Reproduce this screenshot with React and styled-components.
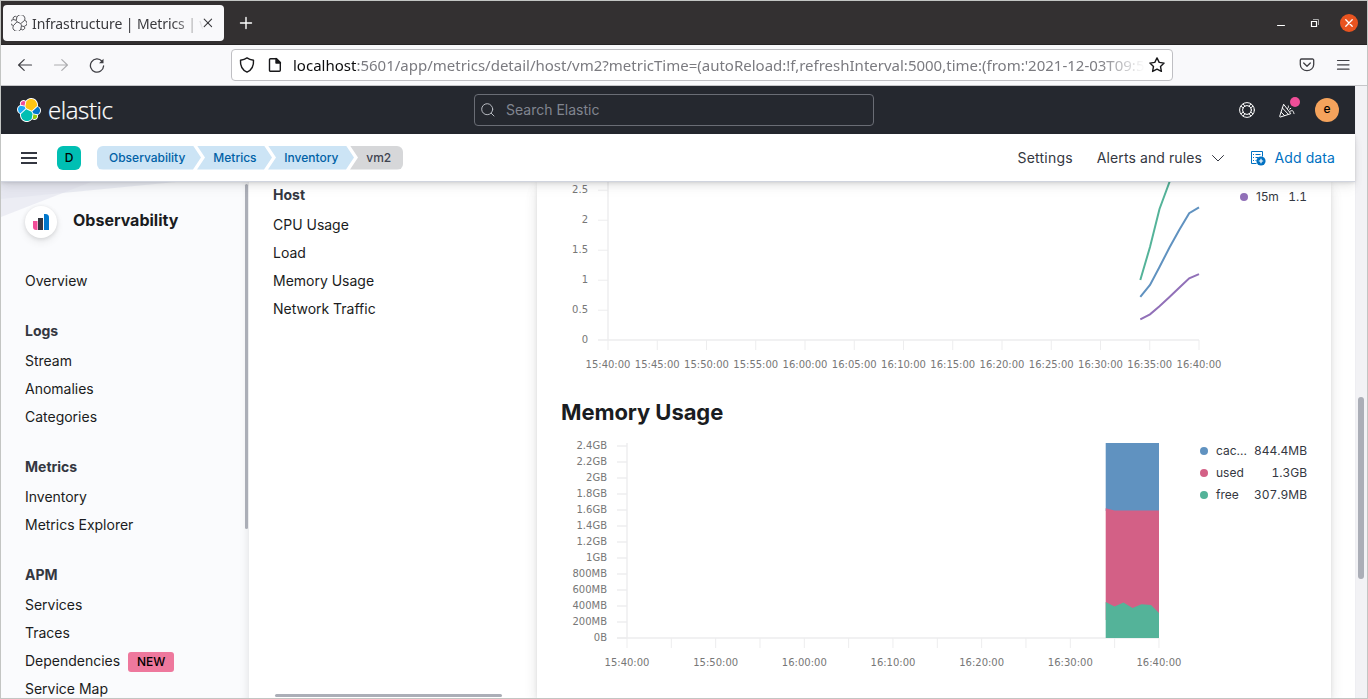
import React from "react";
import styled, { createGlobalStyle } from "styled-components";

const GlobalStyle = createGlobalStyle`
  *, *::before, *::after { box-sizing: border-box; }
  body { margin: 0; font-family: Inter, "Liberation Sans", sans-serif; font-size: 14px; color: #343741; }
  ul, h1, h2, h3 { margin: 0; padding: 0; list-style: none; }
`;

const ui = `"Noto Sans", "Open Sans", sans-serif`;

/* ---------- window ---------- */
const Window = styled.div`
  width: 1368px; height: 699px; border: 1px solid #c3c5c3; background: #fff;
  display: flex; flex-direction: column; overflow: hidden;
`;
const TitleBar = styled.div`
  height: 44px; flex: none; background: #333031; border-bottom: 1px solid #252324;
  display: flex; align-items: center; padding-right: 9px; color: #fff;
`;
const Tab = styled.div`
  width: 221px; height: 36px; margin-left: 2px; background: #f9f9fb; border-radius: 4px;
  display: flex; align-items: center; padding: 0 8px 0 8px; color: #3a3a3e;
`;
const TabTitle = styled.span`
  font: 14px/20px ${ui}; letter-spacing: -0.1px; white-space: nowrap; width: 171px; margin: 2px 0 0 5px; overflow: hidden;
  mask-image: linear-gradient(to right, #000 140px, transparent 173px);
`;
const NewTab = styled.div`margin-left: 15px; display: flex; flex: 1;`;
const WindowButtons = styled.div`display: flex; align-items: center;`;
const CloseButton = styled.div`
  width: 18px; height: 18px; border-radius: 50%; background: #e95420; margin-left: 20px;
  display: flex; align-items: center; justify-content: center;
`;
const Toolbar = styled.div`
  height: 41px; flex: none; background: #f9f9fb; border-bottom: 1px solid #c6c6c9;
  display: flex; align-items: center; padding: 0 16px 0 16px;
`;
const NavButtons = styled.div`display: flex; gap: 20px; width: 214px;`;
const AddressBar = styled.div`
  width: 942px; height: 32px; border: 1px solid #bfbfc3; border-radius: 4px; background: #fff;
  display: flex; align-items: center; padding: 0 7px;
`;
const Url = styled.span`
  flex: 1; margin-left: 11px; margin-right: 4px; overflow: hidden; white-space: nowrap; font: 15px/24px ${ui};
  color: #7b7b80;
  mask-image: linear-gradient(to right, #000 805px, transparent 852px);
  b { font-weight: 400; color: #0c0c0d; }
`;
const ToolbarEnd = styled.div`margin-left: auto; display: flex; gap: 20px;`;

/* ---------- page ---------- */
const Viewport = styled.div`flex: 1; display: flex; min-height: 0;`;
const Page = styled.div`width: 1354px; display: flex; flex-direction: column; min-height: 0;`;
const ScrollTrack = styled.div`
  flex: 1; background: #f2f2f5; border-left: 1px solid #eeeef2; padding: 311px 0 0 2px;
`;
const ScrollThumb = styled.div`
  width: ${(p) => p.$w}px; height: ${(p) => p.$h}px; border-radius: 3px; background: #abaeb7;
`;
const BrandBar = styled.header`
  height: 48px; flex: none; background: #25282f; display: flex; align-items: center;
  justify-content: space-between; padding: 0 16px;
`;
const Brand = styled.div`display: flex; align-items: center; gap: 7px; width: 232px;`;
const Wordmark = styled.span`
  color: #fff; font: 300 24px/30px "Open Sans", "Noto Sans", sans-serif; letter-spacing: -0.4px; margin-top: -1px;
  -webkit-text-stroke: 0.25px #fff;
`;
const SearchBox = styled.div`
  width: 400px; height: 32px; border: 1px solid #6a6d75; border-radius: 4px; display: flex; align-items: center;
  gap: 11px; padding-left: 6px; color: #81858f; line-height: 18px;
`;
const SearchText = styled.span`margin-top: 0;`;
const BrandActions = styled.div`
  width: 240px; display: flex; justify-content: flex-end; align-items: center; gap: 24px;
`;
const Notify = styled.div`position: relative; width: 16px; height: 16px; display: flex;`;
const NotifyDot = styled.span`
  position: absolute; right: -5px; top: -5px; width: 10px; height: 10px; border-radius: 50%; background: #f04e98;
`;
const Avatar = styled.div`
  width: 24px; height: 24px; border-radius: ${(p) => (p.$space ? "6px" : "50%")};
  background: ${(p) => (p.$space ? "#00bfb3" : "#f5a35c")}; color: #000; font-size: 12px; font-weight: 500;
  line-height: 22px; display: flex; justify-content: center; padding-top: ${(p) => (p.$space ? 1 : 0)}px;
  margin-left: ${(p) => (p.$space ? 20 : -4)}px;
`;
const CrumbBar = styled.div`
  height: 48px; flex: none; background: #fff; border-bottom: 1px solid #d0d4de; position: relative; z-index: 2;
  box-shadow: 0 1px 3px rgba(0,0,0,.1), 0 3px 8px rgba(0,0,0,.08), 0 8px 12px rgba(0,0,0,.03);
  display: flex; align-items: center; padding: 0 20px;
`;
const Crumbs = styled.ul`display: flex; margin-left: 16px;`;
const Crumb = styled.li`
  height: 24px; width: ${(p) => p.$w}px; margin-right: -4px; font-size: 12px; line-height: 24px; font-weight: 500;
  padding-left: ${(p) => (p.$first ? 12 : 16.3)}px; white-space: nowrap;
  color: ${(p) => (p.$last ? "#404350" : "#0061a6")};
  background: ${(p) => (p.$last ? "#d6d7d9" : "#cce4f5")};
  border-radius: ${(p) => (p.$first ? "6px 0 0 6px" : p.$last ? "0 6px 6px 0" : 0)};
  clip-path: ${(p) =>
    p.$first
      ? "polygon(0 0, calc(100% - 8px) 0, 100% 50%, calc(100% - 8px) 100%, 0 100%)"
      : p.$last
      ? "polygon(0 0, 100% 0, 100% 100%, 0 100%, 8px 50%)"
      : "polygon(0 0, calc(100% - 8px) 0, 100% 50%, calc(100% - 8px) 100%, 0 100%, 8px 50%)"};
`;
const PageLinks = styled.div`margin-left: auto; display: flex; align-items: center; gap: 24px;`;
const PageLink = styled.span`
  display: flex; align-items: center; gap: ${(p) => p.$gap || 8}px; letter-spacing: ${(p) => p.$spacing || 0.1}px;
  color: ${(p) => (p.$primary ? "#0071c2" : "#343741")};
`;

const Content = styled.div`flex: 1; display: flex; min-height: 0; overflow: hidden;`;
const Sidebar = styled.aside`
  width: 248px; flex: none; display: flex; background: #fafbfd; overflow: hidden;
  box-shadow: inset -8px 0 8px -7px rgba(0,0,0,.1);
`;
const SidebarBody = styled.div`flex: 1; padding-left: 24px; position: relative;`;
const Beams = styled.svg`position: absolute; left: 0; top: 0;`;
const SidebarHead = styled.div`display: flex; gap: 16px; margin: 24px 0 28px; position: relative; height: 32px;`;
const SolutionIcon = styled.div`
  width: 32px; height: 32px; border-radius: 50%; background: #fff; display: flex; align-items: center;
  justify-content: center; box-shadow: 0 1px 4px rgba(0,0,0,.12), 0 4px 8px rgba(0,0,0,.07);
`;
const SolutionName = styled.h2`font-size: 16px; line-height: 24px; font-weight: 700; color: #1a1c21; margin-top: 2px;`;
const Group = styled.ul`margin-bottom: 27px;`;
const GroupTitle = styled.li`font-weight: 700; font-size: 14px; line-height: 20px; margin-bottom: 5px; color: #343741;`;
const NavItem = styled.li`
  height: 28px; display: flex; align-items: center; gap: 8px; color: #1a1c21; letter-spacing: -0.01px;
`;
const NewBadge = styled.span`
  height: 20px; width: 46px; border-radius: 3px; background: #ee789d; color: #000; font-size: 12px; font-weight: 500;
  line-height: 20px; text-align: center; margin-top: 3px;
`;
const SideScroll = styled.div`width: 4px; padding-top: 2px; flex: none;`;
const HostNav = styled.nav`
  width: 288px; flex: none; padding: 3px 0 0 24px; display: flex; flex-direction: column; justify-content: space-between;
`;
const HostScroll = styled.div`padding: 0 0 1px 2px;`;
const Panel = styled.main`
  width: 794px; flex: none; padding: 0 24px; background: #fff;
  box-shadow: 0 1px 4px rgba(0,0,0,.08), 0 4px 12px rgba(0,0,0,.07), 0 8px 16px rgba(0,0,0,.05);
`;
const ChartRow = styled.section`display: flex; height: ${(p) => p.$h}px;`;
const ChartTitle = styled.h1`
  font-size: 22px; line-height: 32px; font-weight: 700; color: #1a1c21; margin: 14px 0 12px; letter-spacing: -0.08px;
`;
const Legend = styled.ul`margin-left: auto; width: ${(p) => p.$w}px; padding-top: ${(p) => p.$top}px;`;
const LegendItem = styled.li`
  display: flex; align-items: center; height: 22px; font-size: 12px; line-height: 18px; letter-spacing: 0; color: #343741;
  &::before { content: ""; width: 8px; height: 8px; border-radius: 50%; background: ${(p) => p.$color}; margin-right: 8px; }
`;
const LegendLabel = styled.span`margin-top: 0;`;
const LegendValue = styled.span`margin: 0 0 0 auto; font-variant-numeric: tabular-nums;`;
const ChartSvg = styled.svg`
  flex: none; display: block; overflow: visible;
  text { font: 10px "DejaVu Sans", sans-serif; fill: #777; }
`;

/* ---------- icons ---------- */
const Line = ({ size = 16, d, color = "currentColor", w = 1, children }) => (
  <svg width={size} height={size} viewBox={`0 0 ${size} ${size}`} fill="none" stroke={color} strokeWidth={w} strokeLinecap="round" strokeLinejoin="round">
    {d && <path d={d} />}
    {children}
  </svg>
);

const clusterPaths = [
  ["#fec514", "M12.58 13.787l7.002 3.211 7.066-6.213a7.849 7.849 0 00.152-1.557c0-1.692-.539-3.34-1.54-4.704a7.897 7.897 0 00-4.02-2.869 7.87 7.87 0 00-4.932.086 7.9 7.9 0 00-3.92 3.007l-1.174 6.118z"],
  ["#00bfb3", "M5.333 21.228A7.964 7.964 0 006.72 27.53a7.918 7.918 0 004.04 2.874 7.89 7.89 0 004.95-.097 7.921 7.921 0 003.926-3.03l1.166-6.102-1.555-2.984-7.03-3.211z"],
  ["#f04e98", "M5.288 9.067l4.8 1.137L11.14 4.73a3.785 3.785 0 00-4.538-.023A3.82 3.82 0 005.13 6.882a3.844 3.844 0 00.158 2.185"],
  ["#1ba9f5", "M4.872 10.214a5.294 5.294 0 00-2.595 1.882 5.324 5.324 0 00-.142 6.124 5.287 5.287 0 002.505 2l6.733-6.101-1.235-2.65z"],
  ["#93c90e", "M20.873 27.277a3.736 3.736 0 002.285.785 3.783 3.783 0 003.101-1.63 3.813 3.813 0 00.451-3.484l-4.8-1.125z"],
  ["#0077cc", "M21.848 20.563l5.28 1.238a5.34 5.34 0 002.622-1.938 5.37 5.37 0 001.013-3.106 5.312 5.312 0 00-.936-3.01 5.283 5.283 0 00-2.475-1.944l-6.904 6.07z"],
];
const clusterBase =
  "M32 16.77a6.334 6.334 0 00-1.14-3.63 6.269 6.269 0 00-3.02-2.3 9.098 9.098 0 00-.873-5.965A9.05 9.05 0 0022.56.746a9.007 9.007 0 00-5.994-.419 9.04 9.04 0 00-4.92 3.455 4.789 4.789 0 00-5.798-.047A4.833 4.833 0 004.21 9.326a6.357 6.357 0 00-3.035 2.33A6.4 6.4 0 000 15.3a6.346 6.346 0 001.145 3.643 6.282 6.282 0 003.034 2.302 9.054 9.054 0 00.874 5.958 9.007 9.007 0 004.403 4.122 8.965 8.965 0 005.987.417 8.999 8.999 0 004.915-3.45 4.782 4.782 0 002.894.995 4.774 4.774 0 002.898-.952 4.813 4.813 0 001.732-2.515 4.84 4.84 0 00-.09-3.056 6.357 6.357 0 003.036-2.33A6.402 6.402 0 0032 16.77";

const ElasticLogo = () => (
  <svg width="24" height="24" viewBox="0 0 32 32">
    <path fill="#fff" d={clusterBase} />
    {clusterPaths.map(([c, d]) => <path key={c} fill={c} d={d} />)}
  </svg>
);
const ElasticOutline = () => (
  <svg width="16" height="16" viewBox="0 0 32 32" fill="none" stroke="#4c4c50" strokeWidth="1.9" strokeLinejoin="round">
    <path d="M12 13.6l7.5 3.6 7.8-6.5A8.1 8.1 0 0011.7 4.6l-1.2 6.2z" />
    <path d="M20 18.2l.9 3.3-1.2 6.300A8.1 8.1 0 014.8 21.2l7.2-7.6" />
    <path d="M10.5 10.5L5 9.200A4 4 0 0111.5 4.400M5 9.2a5.7 5.7 0 00-.5 11.6M20.9 21.8l5.9 1.400A4 4 0 0120 27.8M27.3 10.9a5.7 5.7 0 01-.3 11.3" />
  </svg>
);
const HelpIcon = () => (
  <Line color="#fff">
    <circle cx="8" cy="8" r="7.4" />
    <circle cx="8" cy="8" r="4.4" />
    <path d="M2.2 4.400L4.500 6M4.400 2.200L6 4.500M13.800 4.400L11.500 6M11.600 2.200L10 4.500M2.200 11.600L4.500 10M4.400 13.800L6 11.500M13.800 11.600L11.500 10M11.600 13.800L10 11.500" />
  </Line>
);
const CheerIcon = () => (
  <Line color="#fff">
    <path d="M4.5 2.6L.7 14.3c-.1.5.2.8.7.7l10-3.2zM3.5 6.1l5.7 6M2.2 10.3l3.4 3.3M8.5 6.5c.9-.5 1.2-1.5.9-2.5M11 9.4c1.1-1 2.5-1 3.2 0 .6.9.3 1.9.9 2.4M10.5 7.2l1.3-.9" />
  </Line>
);
const AddDataIcon = () => (
  <svg width="17" height="16" viewBox="0 0 17 16" fill="none" stroke="#0071c2">
    <path d="M6.5 13.5h-5v-12h11v5M5.500 4.500h5M5.500 7.500h3M5.500 10.500h1" />
    <path d="M3 4.500h1M3 7.500h1M3 10.500h1" />
    <circle cx="11" cy="11" r="4.6" fill="#0071c2" stroke="none" />
    <path d="M8.8 11h4.4M11 8.8v4.4" stroke="#fff" strokeWidth="1.2" />
  </svg>
);
const ObservabilityLogo = () => (
  <svg width="16" height="16" viewBox="0 0 16 16">
    <path fill="#f04e98" d="M0 7h4.500v9H3a3 3 0 01-3-3z" />
    <path fill="#343741" d="M5 4h5v12H5z" />
    <path fill="#0077cc" d="M11 0h1.500A3.500 3.500 0 0116 3.500V16h-5z" />
  </svg>
);
const RestoreIcon = styled.svg`margin-left: 24px;`;
const DocIcon = styled.svg`margin-left: 13px;`;

/* ---------- charts ---------- */
const loadSeries = [
  ["#54b399", [[579.3, 98], [589, 65], [598.5, 27], [608.5, 0], [612, -10]]],
  ["#6092c0", [[579.3, 114.8], [589, 103], [598.5, 85], [608.5, 65.5], [618.2, 48], [628.2, 31.2], [638, 25.3]]],
  ["#9170b8", [[579.3, 137.3], [589, 132.3], [598.5, 124.3], [608.5, 115], [618.2, 105.7], [628.2, 96.3], [638, 92.2]]],
];
const points = (list) => list.map((p) => p.join(",")).join(" ");
const clock = (minutes) => `${15 + Math.floor(minutes / 60)}:${String(minutes % 60).padStart(2, "0")}:00`;

const LoadChart = () => (
  <ChartSvg width="662" height="200">
    <g stroke="#ededee">
      <path d="M47 0V158" strokeWidth="1.4" />
      <path d="M37 158H638" strokeWidth="1.4" />
      {[8, 38, 68, 98, 128].map((y) => <path key={y} d={`M37 ${y}.2H47`} />)}
      {Array.from({ length: 13 }, (_, i) => <path key={i} d={`M${47 + i * 49.25} 158V168`} />)}
    </g>
    {["2.5", "2", "1.5", "1", "0.5", "0"].map((t, i) => (
      <text key={t} x="27" y={11.3 + i * 30} textAnchor="end">{t}</text>
    ))}
    {Array.from({ length: 13 }, (_, i) => (
      <text key={i} x={47 + i * 49.25} y="185.5" textAnchor="middle">{clock(40 + i * 5)}</text>
    ))}
    <svg width="662" height="200">
      {loadSeries.map(([c, list]) => (
        <polyline key={c} points={points(list)} fill="none" stroke={c} strokeWidth="2" />
      ))}
    </svg>
  </ChartSvg>
);

const memoryTicks = ["2.4GB", "2.2GB", "2GB", "1.8GB", "1.6GB", "1.4GB", "1.2GB", "1GB", "800MB", "600MB", "400MB", "200MB", "0B"];
const MemoryChart = () => (
  <ChartSvg width="622" height="235">
    <g stroke="#ededee">
      <path d="M66 3V198" strokeWidth="1.4" />
      <path d="M56 198H598" strokeWidth="1.4" />
      {memoryTicks.map((t, i) => <path key={t} d={`M56 ${6 + i * 16}H66`} strokeWidth="1.4" />)}
      {Array.from({ length: 13 }, (_, i) => <path key={i} d={`M${66 + i * 44.33} 198V208`} />)}
    </g>
    <path fill="#6092c0" d="M544.7 3H598V71H544.7z" />
    <path fill="#d36086" d="M544.7 68.2L553.5 70.5H598V180H544.7z" />
    <path fill="#54b399" d="M544.7 162L553.5 166.5 562.5 162.5 571.5 168 580.5 164.3 590 165 598 173V198H544.7z" />
    {memoryTicks.map((t, i) => <text key={t} x="46" y={9.3 + i * 16} textAnchor="end">{t}</text>)}
    {Array.from({ length: 7 }, (_, i) => (
      <text key={i} x={66 + i * 88.66} y="225.5" textAnchor="middle">{clock(40 + i * 10)}</text>
    ))}
  </ChartSvg>
);

const sideGroups = [
  { items: ["Overview"] },
  { title: "Logs", items: ["Stream", "Anomalies", "Categories"] },
  { title: "Metrics", items: ["Inventory", "Metrics Explorer"] },
  { title: "APM", items: ["Services", "Traces", "Dependencies", "Service Map"] },
];

const NavGroup = ({ title, items }) => (
  <Group>
    {title && <GroupTitle>{title}</GroupTitle>}
    {items.map((item) => (
      <NavItem key={item}>
        {item}
        {item === "Dependencies" && <NewBadge>NEW</NewBadge>}
      </NavItem>
    ))}
  </Group>
);

const LegendRow = ({ color, label, value }) => (
  <LegendItem $color={color}>
    <LegendLabel>{label}</LegendLabel>
    <LegendValue>{value}</LegendValue>
  </LegendItem>
);

export default function App() {
  return (
    <Window>
      <GlobalStyle />
      <TitleBar>
        <Tab>
          <ElasticOutline />
          <TabTitle>Infrastructure | Metrics | v</TabTitle>
          <Line size={10} d="M1.2 1.2l7.4 7.4M8.6 1.2L1.2 8.6" w={1.1} />
        </Tab>
        <NewTab><Line size={14} d="M7 1.5v11M1.5 7h11" w={1.4} color="#fff" /></NewTab>
        <WindowButtons>
          <Line size={10} d="M1.5 7.5h7" color="#fff" />
          <RestoreIcon width="10" height="10" viewBox="0 0 10 10" fill="none" stroke="#fff">
            <path d="M1.5 3.5h5v5h-5z" strokeWidth="1.2" />
            <path d="M3 1.5h5.5V7" stroke="#aaa" />
          </RestoreIcon>
          <CloseButton><Line size={8} d="M.8 .8l6.4 6.4M7.2 .8L.8 7.2" w={1.3} color="#fff" /></CloseButton>
        </WindowButtons>
      </TitleBar>
      <Toolbar>
        <NavButtons>
          <Line d="M14.5 8h-13M7.2 2.6L1.6 8l5.6 5.4" w={1.2} color="#3f3f44" />
          <Line d="M1.5 8h13M8.8 2.6L14.4 8l-5.6 5.4" w={1.2} color="#adadb0" />
          <Line color="#3f3f44" w={1.3}>
            <path d="M13 4.2A6.6 6.6 0 1014.6 9" />
            <path d="M14.5 1.7v4.6H10z" fill="#3f3f44" stroke="none" />
          </Line>
        </NavButtons>
        <AddressBar>
          <Line color="#18181a" w={1.4} d="M8 .9c2 1.4 4.3 2 6.5 2.3.4 5.5-1.4 9.6-6.5 11.9C2.9 12.8 1.1 8.7 1.5 3.2 3.7 2.9 6 2.3 8 .9z" />
          <DocIcon width="14" height="16" viewBox="0 0 14 16" fill="none" stroke="#18181a" strokeWidth="1.4" strokeLinejoin="round">
            <path d="M2.5 1.7H8.5L12.3 5.5V13.3a1 1 0 01-1 1H2.5a1 1 0 01-1-1V2.7a1 1 0 011-1z" />
            <path d="M8 1.5V6h4.5z" fill="#18181a" />
          </DocIcon>
          <Url>
            <b>localhost</b>:5601/app/metrics/detail/host/vm2?metricTime=(autoReload:!f,refreshInterval:5000,time:(from:'2021-12-03T09:5
          </Url>
          <Line color="#18181a" w={1.4} d="M8 .9l2.2 4.5 4.9.7-3.6 3.4.9 4.9L8 12.1l-4.4 2.3.9-4.9L.9 6.1l4.9-.7z" />
        </AddressBar>
        <ToolbarEnd>
          <Line color="#3f3f44" w={1.3}>
            <path d="M2.5 2h11a1.2 1.2 0 011.2 1.2V7.5a6.7 6.2 0 01-13.4 0V3.2A1.2 1.2 0 012.5 2z" />
            <path d="M4.7 6L8 9.2 11.3 6" />
          </Line>
          <Line color="#3f3f44" w={1.2} d="M2.5 3.5h11.5M2.5 7.8h11.5M2.5 12.2h11.5" />
        </ToolbarEnd>
      </Toolbar>
      <Viewport>
        <Page>
          <BrandBar>
            <Brand><ElasticLogo /><Wordmark>elastic</Wordmark></Brand>
            <SearchBox>
              <Line size={14} color="#b8bbc2"><circle cx="6.2" cy="6.2" r="5.5" /><path d="M10.3 10.3L13 13" /></Line>
              <SearchText>Search Elastic</SearchText>
            </SearchBox>
            <BrandActions>
              <HelpIcon />
              <Notify><CheerIcon /><NotifyDot /></Notify>
              <Avatar>e</Avatar>
            </BrandActions>
          </BrandBar>
          <CrumbBar>
            <svg width="16" height="16" viewBox="0 0 16 16" fill="#343741"><path d="M0 2h16v2H0zM0 7h16v2H0zM0 12h16v2H0z" /></svg>
            <Avatar $space>D</Avatar>
            <Crumbs>
              <Crumb $w={104} $first>Observability</Crumb>
              <Crumb $w={75}>Metrics</Crumb>
              <Crumb $w={86}>Inventory</Crumb>
              <Crumb $w={53} $last>vm2</Crumb>
            </Crumbs>
            <PageLinks>
              <PageLink $spacing={0.2}>Settings</PageLink>
              <PageLink $gap={7.5}>Alerts and rules <Line d="M2.5 5.5L8 11l5.5-5.5" /></PageLink>
              <PageLink $primary><AddDataIcon />Add data</PageLink>
            </PageLinks>
          </CrumbBar>
          <Content>
            <Sidebar>
              <SidebarBody>
                <Beams width="244" height="40">
                  <path d="M0 0H175L0 17z" fill="#dfe2ec" opacity=".6" />
                  <path d="M0 0H90L0 35z" fill="#e3e5ee" opacity=".6" />
                </Beams>
                <SidebarHead>
                  <SolutionIcon><ObservabilityLogo /></SolutionIcon>
                  <SolutionName>Observability</SolutionName>
                </SidebarHead>
                {sideGroups.map((g) => <NavGroup key={g.items[0]} {...g} />)}
              </SidebarBody>
              <SideScroll><ScrollThumb $w={3} $h={345} /></SideScroll>
            </Sidebar>
            <HostNav>
              <NavGroup title="Host" items={["CPU Usage", "Load", "Memory Usage", "Network Traffic"]} />
              <HostScroll><ScrollThumb $w={227} $h={3} /></HostScroll>
            </HostNav>
            <Panel>
              <ChartRow $h={200}>
                <LoadChart />
                <Legend $w={67} $top={4}>
                  <LegendRow color="#9170b8" label="15m" value="1.1" />
                </Legend>
              </ChartRow>
              <ChartTitle>Memory Usage</ChartTitle>
              <ChartRow $h={235}>
                <MemoryChart />
                <Legend $w={107} $top={0}>
                  <LegendRow color="#6092c0" label="cac..." value="844.4MB" />
                  <LegendRow color="#d36086" label="used" value="1.3GB" />
                  <LegendRow color="#54b399" label="free" value="307.9MB" />
                </Legend>
              </ChartRow>
            </Panel>
          </Content>
        </Page>
        <ScrollTrack><ScrollThumb $w={6} $h={182} /></ScrollTrack>
      </Viewport>
    </Window>
  );
}
